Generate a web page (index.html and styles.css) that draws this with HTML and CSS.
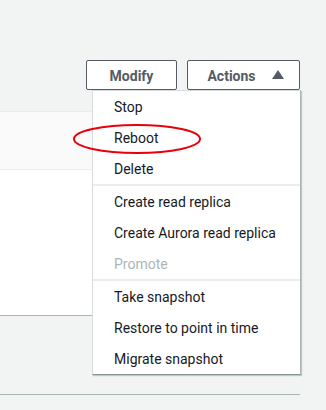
FILE: index.html
```html
<!DOCTYPE html>
<html lang="en">
<head>
    <meta charset="UTF-8">
    <meta name="viewport" content="width=device-width, initial-scale=1.0">
    <title>Instance Actions</title>
    <link rel="stylesheet" href="styles.css">
</head>
<body>
    <div class="page">
        <div class="toolbar">
            <button class="btn">Modify</button>
            <div class="actions">
                <button class="btn btn-actions">Actions <span class="caret"></span></button>

                <!-- Dropdown menu, open -->
                <ul class="menu">
                    <li>Stop</li>
                    <li>Reboot</li>
                    <li>Delete</li>
                    <li class="sep"></li>
                    <li>Create read replica</li>
                    <li>Create Aurora read replica</li>
                    <li class="disabled">Promote</li>
                    <li class="sep"></li>
                    <li>Take snapshot</li>
                    <li>Restore to point in time</li>
                    <li>Migrate snapshot</li>
                </ul>
            </div>
        </div>

        <div class="panel">
            <div class="panel-head"></div>
            <div class="panel-body"></div>
        </div>

        <div class="rule"></div>
    </div>

    <!-- Red highlight round "Reboot" -->
    <svg class="mark" width="130" height="32" viewBox="0 0 130 32">
        <ellipse cx="65" cy="16" rx="63" ry="14" fill="none" stroke="#e8000b" stroke-width="2"/>
    </svg>
</body>
</html>
```

FILE: styles.css
```css
body {
    margin: 0;
    background-color: #f2f3f3;
    font-family: Roboto, "Noto Sans", sans-serif;
    color: #16191f;
    position: relative;
    height: 410px;
    overflow: hidden;
}

.page {
    width: 300px;
    padding-top: 60px;
}

.toolbar {
    display: flex;
    justify-content: flex-end;
    gap: 10px;
}

.btn {
    height: 30px;
    width: 91px;
    background-color: #fff;
    border: 1px solid #545b64;
    border-radius: 2px;
    color: #545b64;
    font-family: inherit;
    font-size: 14px;
    font-weight: bold;
    padding: 1px 0 0;
}

.actions {
    position: relative;
}

.btn-actions {
    width: 113px;
    display: flex;
    align-items: center;
    justify-content: center;
    gap: 16px;
    padding-left: 4px;
}

.caret {
    width: 0;
    height: 0;
    border-left: 6px solid transparent;
    border-right: 6px solid transparent;
    border-bottom: 9px solid #545b64;
    margin-top: -2px;
}

.menu {
    position: absolute;
    top: 30px;
    right: -1px;
    width: 207px;
    margin: 0;
    padding: 0;
    list-style: none;
    background-color: #fff;
    border: 1px solid #d5dbdb;
    border-right-color: #aab7b8;
    border-bottom-color: #879596;
    box-shadow: 1px 1px 1px rgba(0, 22, 22, 0.2);
    z-index: 2;
}

.menu li {
    height: 30px;
    line-height: 30px;
    padding: 1px 0 0 21px;
    font-size: 14px;
}

.menu li.sep {
    height: 2px;
    padding: 0;
    background-color: #eaeded;
}

.menu li.disabled {
    color: #aab7b8;
}

.panel {
    margin-top: 21px;
    border-top: 1px solid #eaeded;
    border-bottom: 1px solid #aab7b8;
}

.panel-head {
    height: 57px;
    background-color: #fafafa;
    border-bottom: 1px solid #eaeded;
}

.panel-body {
    height: 145px;
    background-color: #fff;
}

.rule {
    margin-top: 78px;
    height: 1px;
    background-color: #aab7b8;
}

.mark {
    position: absolute;
    left: 72px;
    top: 123px;
    z-index: 3;
}
```
